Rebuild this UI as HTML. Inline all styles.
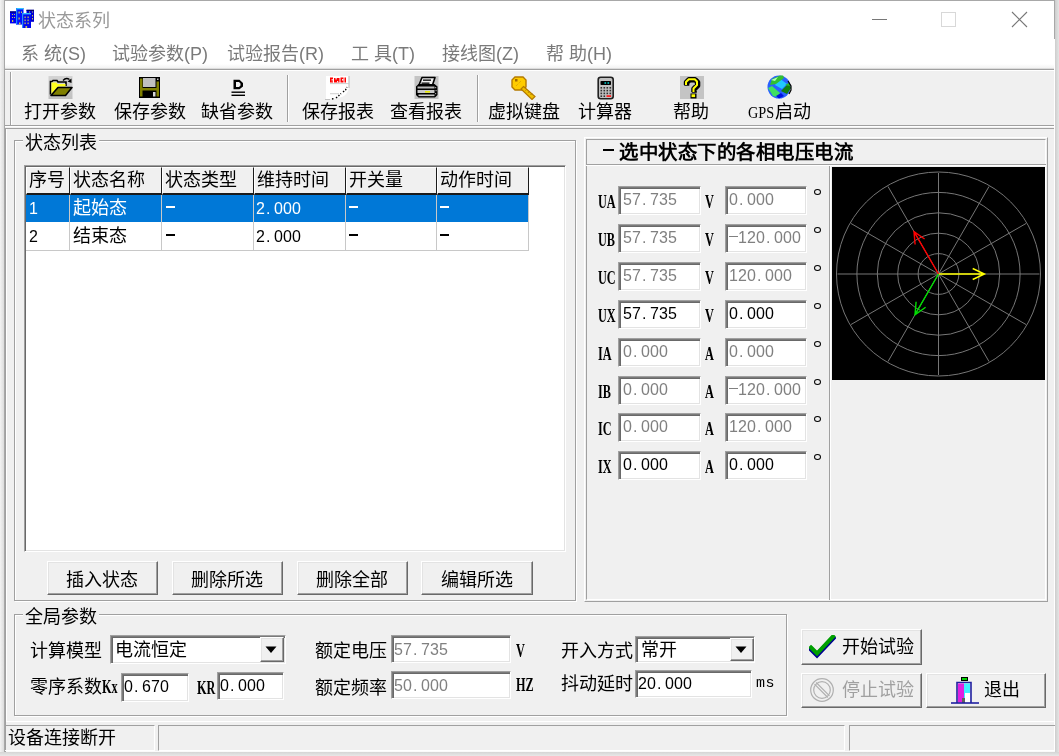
<!DOCTYPE html>
<html lang="zh-CN">
<head>
<meta charset="utf-8">
<style>
*{margin:0;padding:0;box-sizing:border-box}
html,body{width:1059px;height:756px;overflow:hidden}
body{position:relative;background:#e6e6e6;font-family:"Liberation Sans",sans-serif;color:#000}
.a{position:absolute}
.t{position:absolute;white-space:nowrap;line-height:1}
.hl{position:absolute;height:1px}
.vl{position:absolute;width:1px}
.g{background:#a0a0a0}
.w{background:#fff}
.d{background:#696969}
.cj{font-size:18px;line-height:18px}
.mono{font-family:"Liberation Mono",monospace}
/* sunken edit */
.ed{position:absolute;background:#fff;border-top:1px solid #a0a0a0;border-left:1px solid #a0a0a0;border-right:1px solid #fff;border-bottom:1px solid #fff;box-shadow:inset 1px 1px 0 #7a7a7a, inset 2px 2px 0 #696969, inset -1px -1px 0 #e3e3e3}
.num{position:absolute;font-family:"Liberation Sans",sans-serif;font-size:16px;line-height:16px;white-space:nowrap;letter-spacing:0.1px}
.dt{display:inline-block;width:9px;text-indent:1px}
.mn{display:inline-block;width:9px;height:16px;vertical-align:top;background:linear-gradient(currentColor,currentColor) no-repeat 0 6px/9px 1px}
.dis{color:#808080}
/* raised button */
.btn{position:absolute;background:#f0f0f0;border-top:1px solid #fff;border-left:1px solid #fff;border-right:1px solid #696969;border-bottom:1px solid #696969;box-shadow:inset -1px -1px 0 #a0a0a0, inset 1px 1px 0 #e3e3e3}
.lab{position:absolute;font-family:"Liberation Serif",serif;font-weight:bold;font-size:18px;line-height:18px;white-space:nowrap;transform-origin:0 0;transform:scaleX(0.68)}
</style>
</head>
<body>
<div id="root" style="position:absolute;left:0;top:0;width:1059px;height:756px;overflow:hidden;filter:blur(0.4px)">
<!-- window frame -->
<div class="a" style="left:0;top:0;width:4px;height:756px;background:linear-gradient(90deg,#f3f3f3,#dcdcdc)"></div>
<div class="a" style="left:1055px;top:0;width:4px;height:756px;background:linear-gradient(90deg,#cdcdcd,#e4e4e4)"></div>
<div class="a" style="left:0;top:752px;width:1059px;height:4px;background:linear-gradient(#d5d5d5,#e8e8e8)"></div>
<div class="a" style="left:4px;top:0;width:1051px;height:752px;background:#f0f0f0;border-top:1px solid #a8a8a8;border-left:1px solid #a8a8a8"></div>
<div class="a w" style="left:1054px;top:39px;width:1px;height:713px"></div>
<div class="a" style="left:1054px;top:0;width:1px;height:39px;background:#a8a8a8"></div>
<div class="a" style="left:5px;top:751px;width:1050px;height:1px;background:#fafafa"></div>
<!-- title + menu white area -->
<div class="a w" style="left:5px;top:1px;width:1049px;height:68px"></div>
<div class="a" style="left:5px;top:64px;width:1049px;height:5px;background:linear-gradient(#fff,#f0f0f0)"></div>
<div class="hl" style="left:5px;top:68px;width:1049px;background:#dcdcdc"></div>
<div class="hl g" style="left:5px;top:69px;width:1049px"></div>
<div class="hl w" style="left:5px;top:70px;width:1049px"></div>

<!-- title -->
<div id="appicon" class="a" style="left:10px;top:8px;width:25px;height:21px">
<svg width="25" height="21" viewBox="0 0 25 21">
<rect x="0" y="3.4" width="6.5" height="12" fill="#0000f0"/>
<rect x="0" y="3.4" width="6.5" height="1.3" fill="#000070"/>
<rect x="16.5" y="1.8" width="7.5" height="12" fill="#0000d0"/>
<rect x="16.5" y="1.8" width="7.5" height="1.2" fill="#000060"/>
<rect x="6" y="0" width="7.5" height="16.6" fill="#0010ff"/>
<rect x="6" y="0" width="7.5" height="1.4" fill="#30c8ff"/>
<rect x="6" y="0" width="1.2" height="16.6" fill="#2090ff"/>
<rect x="12" y="5" width="9" height="15" fill="#0008f0"/>
<rect x="12" y="5" width="9" height="1.4" fill="#30c0ff"/>
<rect x="12" y="5" width="1.2" height="15" fill="#2890ff"/>
<g fill="#c8c850">
<rect x="2" y="6" width="1" height="1"/><rect x="4" y="6" width="1" height="1"/><rect x="2" y="9" width="1" height="1"/><rect x="4" y="9" width="1" height="1"/><rect x="2" y="12" width="1.2" height="2"/>
<rect x="8.5" y="3.5" width="1.2" height="2"/><rect x="11" y="3.5" width="1" height="1.5"/><rect x="8.5" y="9.5" width="1.2" height="2"/><rect x="9" y="14.5" width="1.5" height="2"/>
<rect x="14.5" y="8.5" width="1.2" height="1.6"/><rect x="17.5" y="8.5" width="1.2" height="1.6"/><rect x="14.5" y="11.5" width="1.2" height="1.6"/><rect x="17.5" y="11.5" width="1.2" height="1.6"/><rect x="14.5" y="14.5" width="1.2" height="1.6"/><rect x="17.5" y="14.5" width="1.2" height="1.6"/><rect x="15.5" y="18" width="1.6" height="2"/>
<rect x="19" y="3.5" width="1" height="1"/><rect x="22" y="3.5" width="1" height="1"/><rect x="22" y="7" width="1" height="1.5"/><rect x="22" y="10" width="1" height="1.5"/>
</g>
</svg>
</div>
<div class="t" style="left:38px;top:12px;font-size:18px;color:#999">状态系列</div>
<!-- window controls -->
<div class="a" style="left:872px;top:19px;width:15px;height:1px;background:#777"></div>
<div class="a" style="left:941px;top:12px;width:15px;height:15px;border:1px solid #d8d8d8"></div>
<svg class="a" style="left:1011px;top:11px" width="17" height="17" viewBox="0 0 17 17"><path d="M1 1L16 16M16 1L1 16" stroke="#777" stroke-width="1.1"/></svg>

<!-- menu -->
<div id="menu" style="font-size:18px;color:#7a7a7a">
<div class="t" style="left:21px;top:45px">系 统(S)</div>
<div class="t" style="left:112px;top:45px">试验参数(P)</div>
<div class="t" style="left:227px;top:45px">试验报告(R)</div>
<div class="t" style="left:351px;top:45px">工 具(T)</div>
<div class="t" style="left:442px;top:45px">接线图(Z)</div>
<div class="t" style="left:546px;top:45px">帮 助(H)</div>
</div>

<!-- toolbar -->
<div class="vl g" style="left:10px;top:72px;height:53px"></div>
<div class="vl w" style="left:11px;top:72px;height:53px"></div>
<div class="hl g" style="left:5px;top:125px;width:1049px"></div>
<div class="hl w" style="left:5px;top:126px;width:1049px"></div>
<div class="hl g" style="left:5px;top:128px;width:1049px"></div>
<div class="vl g" style="left:5px;top:128px;height:624px"></div>
<div class="vl w" style="left:6px;top:129px;height:592px"></div>

<div id="tb" class="cj">
<div class="t" style="left:24px;top:103px">打开参数</div>
<div class="t" style="left:114px;top:103px">保存参数</div>
<div class="t" style="left:201px;top:103px">缺省参数</div>
<div class="t" style="left:302px;top:103px">保存报表</div>
<div class="t" style="left:390px;top:103px">查看报表</div>
<div class="t" style="left:488px;top:103px">虚拟键盘</div>
<div class="t" style="left:578px;top:103px">计算器</div>
<div class="t" style="left:673px;top:103px">帮助</div>
<div class="t" style="left:748px;top:103px"><span style="font-family:'Liberation Serif',serif;font-size:17px;display:inline-block;transform:scaleX(0.84);transform-origin:0 0;width:27px">GPS</span>启动</div>
</div>
<div class="vl g" style="left:287px;top:75px;height:47px"></div>
<div class="vl w" style="left:288px;top:75px;height:47px"></div>
<div class="vl g" style="left:477px;top:75px;height:47px"></div>
<div class="vl w" style="left:478px;top:75px;height:47px"></div>


<!-- toolbar icons -->
<svg class="a" style="left:48px;top:76px" width="25" height="23" viewBox="0 0 25 23">
<defs><linearGradient id="gbg" x1="0" y1="0" x2="0" y2="1"><stop offset="0" stop-color="#d4d4d4"/><stop offset="1" stop-color="#c0c0c0"/></linearGradient></defs>
<rect x="0.5" y="0" width="24" height="23" fill="url(#gbg)"/>
<path d="M2.5 18.5V5.5h1.5l1-1h4l1 1.5h8v4" fill="none" stroke="#000" stroke-width="1.6"/>
<path d="M3.5 18V6.5h5l1 1.5h8v2.5H10z" fill="#ffff20"/>
<path d="M3 19.5L10 11.5H24L17.5 19.5z" fill="#808000" stroke="#000" stroke-width="1.6" stroke-linejoin="round"/>
<path d="M15 4.5Q18 1 21.5 3.5" fill="none" stroke="#000" stroke-width="1.3"/>
<path d="M19.5 5.5L23.5 2.5L23.5 7z" fill="#000"/>
</svg>
<svg class="a" style="left:138px;top:76px" width="23" height="23" viewBox="0 0 23 23">
<rect x="1" y="1" width="21" height="21" fill="#000"/>
<rect x="2" y="2.5" width="2.5" height="18" fill="#808000"/>
<rect x="18.5" y="5.5" width="2.5" height="15" fill="#808000"/>
<rect x="4" y="12" width="15" height="2.5" fill="#808000"/>
<rect x="5" y="2" width="12.5" height="9" fill="#c0c0c0"/>
<rect x="19" y="2.5" width="1.5" height="1.5" fill="#c0c0c0"/>
<rect x="15" y="16" width="2.5" height="4.5" fill="#d8d8d8"/>
</svg>
<svg class="a" style="left:231px;top:79px" width="15" height="18" viewBox="0 0 15 18">
<path d="M2.5 0.8H8.5L12 4V7.5L8.5 10.2H2.5z M5 3V8H8L9.5 6.5V4.5L8 3z" fill="#000" fill-rule="evenodd"/>
<rect x="0.5" y="12.5" width="13.5" height="1.4" fill="#000"/>
<rect x="0.5" y="15.6" width="13.5" height="1.4" fill="#000"/>
</svg>
<svg class="a" style="left:325px;top:75px" width="26" height="26" viewBox="0 0 26 26">
<path d="M1 1H24V13Q22 20 17 22L8 24H1z" fill="#fff"/>
<rect x="23.5" y="1" width="1" height="12" fill="#b8b8b8"/>
<rect x="5" y="8.2" width="19" height="0.9" fill="#c8c8c8"/>
<rect x="5" y="18.3" width="9" height="0.9" fill="#c8c8c8"/>
<g fill="#ff0000"><rect x="5" y="2.5" width="3" height="5"/><rect x="9" y="3" width="5.5" height="4.5"/><rect x="15.5" y="2.5" width="3" height="5"/><rect x="19.5" y="2.5" width="1.5" height="5"/></g>
<g fill="#f0f0f0"><rect x="6.5" y="4" width="1.5" height="0.8"/><rect x="6.5" y="5.5" width="1.5" height="0.8"/><rect x="10.5" y="3" width="1.2" height="1.5"/><rect x="12" y="6" width="1.2" height="1.5"/><rect x="17" y="4" width="1.5" height="1.6"/></g>
<path d="M7 24L9 23.5M11 23L14 20.5 16 18.5M18 17L20.5 15 22 12" fill="none" stroke="#000" stroke-width="1.4" stroke-dasharray="1.5 1.5"/>
<rect x="0" y="24" width="5" height="1" fill="#c0c0c0"/>
</svg>
<svg class="a" style="left:414px;top:76px" width="25" height="23" viewBox="0 0 25 23">
<rect x="0.5" y="0" width="24" height="23" fill="#c4c4c4"/>
<path d="M8 1.5H21L18.5 9H5z" fill="#f0f0f0" stroke="#000" stroke-width="1.6" stroke-linejoin="round"/>
<rect x="9" y="3.5" width="8" height="1.3" fill="#000"/><rect x="7.5" y="6.5" width="8" height="1.3" fill="#000"/>
<path d="M2 10.5L4.5 8H20.5L23.5 10.5V19L21 21.5H4.5L2 19z" fill="#000"/>
<rect x="3.5" y="10.5" width="17" height="2" fill="#b8b8b8"/>
<rect x="3.5" y="14" width="17" height="3" fill="#c8c8c8"/>
<rect x="11" y="15" width="5" height="1.6" fill="#e8e800"/>
<rect x="4.5" y="18.5" width="16" height="1.6" fill="#c8c8c8"/>
<g fill="#9a9a9a"><rect x="21" y="11" width="1.2" height="1.2"/><rect x="21.5" y="14" width="1.2" height="1.2"/><rect x="21" y="17" width="1.2" height="1.2"/></g>
</svg>
<svg class="a" style="left:511px;top:75px" width="25" height="25" viewBox="0 0 25 25">
<path d="M4 2H12L15 5V12L12 15H4L1 12V5z" fill="#ffcc00" stroke="#b47a00" stroke-width="1.4"/>
<path d="M12.5 11.5L24 21.5L21 24.5L10 14z" fill="#f0c000" stroke="#b47a00" stroke-width="1.2"/>
<path d="M14.5 15.5L16 14M17 17.8L18.5 16.3M19.5 20L21 18.5" stroke="#b47a00" stroke-width="1"/>
<rect x="4" y="4" width="2.5" height="2.5" fill="#a06800"/>
<path d="M5 11L10 6" stroke="#d8a000" stroke-width="1" stroke-dasharray="1 1"/>
</svg>
<svg class="a" style="left:597px;top:76px" width="18" height="25" viewBox="0 0 18 25">
<rect x="1.2" y="1.2" width="15" height="21.5" rx="2.5" fill="#c0c0c0" stroke="#202020" stroke-width="1.6"/>
<rect x="3.5" y="5" width="10.5" height="4" rx="0.8" fill="#000"/>
<rect x="7.5" y="6.2" width="1.6" height="1.6" fill="#00c8c8"/><rect x="10.5" y="6.2" width="1.6" height="1.6" fill="#00c8c8"/>
<g fill="#303030">
<rect x="3.5" y="11" width="1.6" height="1.6"/><rect x="6.5" y="11" width="1.6" height="1.6"/><rect x="9.5" y="11" width="1.6" height="1.6"/><rect x="12.5" y="11" width="1.6" height="1.6"/>
<rect x="3.5" y="13.8" width="1.6" height="1.6"/><rect x="6.5" y="13.8" width="1.6" height="1.6"/><rect x="9.5" y="13.8" width="1.6" height="1.6"/><rect x="12.5" y="13.8" width="1.6" height="1.6"/>
<rect x="3.5" y="16.6" width="1.6" height="1.6"/><rect x="6.5" y="16.6" width="1.6" height="1.6"/><rect x="9.5" y="16.6" width="1.6" height="1.6"/><rect x="12.5" y="16.6" width="1.6" height="1.6"/>
<rect x="3.5" y="19.4" width="1.6" height="1.6"/><rect x="6.5" y="19.4" width="1.6" height="1.6"/></g>
<rect x="9.5" y="19.2" width="4.6" height="1.8" fill="#ff2020"/>
</svg>
<svg class="a" style="left:680px;top:76px" width="24" height="23" viewBox="0 0 24 23">
<rect x="0" y="0" width="24" height="23" fill="#c4c4c4"/>
<path d="M6 9V6L8.8 3.2H14.8L17 5.5V9L13.5 12.5V16" fill="none" stroke="#000" stroke-width="5" stroke-linejoin="round" transform="translate(0.8,0.8)"/>
<path d="M6 9V6L8.8 3.2H14.8L17 5.5V9L13.5 12.5V16" fill="none" stroke="#000" stroke-width="4.4" stroke-linejoin="round"/>
<path d="M6 9V6L8.8 3.2H14.8L17 5.5V9L13.5 12.5V16" fill="none" stroke="#ffff00" stroke-width="2" stroke-linejoin="round"/>
<rect x="10.5" y="17.5" width="6" height="5" fill="#000"/>
<rect x="11.5" y="18.3" width="3.6" height="2.8" fill="#ffff00"/>
</svg>
<svg class="a" style="left:767px;top:75px" width="25" height="24" viewBox="0 0 25 24">
<circle cx="12" cy="12" r="11.5" fill="#2860ff"/>
<path d="M12 3L20 9L15 14L8 10z" fill="#20c8ff"/>
<path d="M5 4L13 0.5H16L17 3L9 9L3 10z" fill="#30c030"/>
<path d="M4 5L11 2L8 6z" fill="#b0ffb0"/>
<path d="M1 13L5 11L13 18L11 22L6 21z" fill="#40e060"/>
<path d="M14 16L22 8L24 13L20 19z" fill="#108010"/>
<path d="M18 10L22 8L23 11z" fill="#30c030"/>
<path d="M9 21L14 18L17 21L12 23.5z" fill="#0010e0"/>
<path d="M21 6L24 11V15L22 19" fill="none" stroke="#000" stroke-width="1.2"/>
</svg>

<!-- ===== left group: 状态列表 ===== -->
<div class="a" style="left:14px;top:140px;width:562px;height:461px;border:1px solid #a0a0a0;box-shadow:1px 1px 0 #fff, inset 1px 1px 0 #fff"></div>
<div class="t cj" style="left:23px;top:134px;padding:0 2px;background:#f0f0f0">状态列表</div>
<!-- listbox -->
<div class="a" style="left:24px;top:165px;width:542px;height:387px;background:#fff;border-top:1px solid #a0a0a0;border-left:1px solid #a0a0a0;border-right:1px solid #fff;border-bottom:1px solid #fff;box-shadow:inset 1px 1px 0 #696969, inset -1px -1px 0 #e3e3e3"></div>
<!-- header -->
<div id="hdr" class="cj">
<div class="a" style="left:26px;top:167px;width:44px;height:28px;background:#f0f0f0;border-top:1px solid #fff;border-left:1px solid #fff;border-right:1px solid #1a1a1a;border-bottom:2px solid #1a1a1a"></div>
<div class="a" style="left:70px;top:167px;width:92px;height:28px;background:#f0f0f0;border-top:1px solid #fff;border-left:1px solid #fff;border-right:1px solid #1a1a1a;border-bottom:2px solid #1a1a1a"></div>
<div class="a" style="left:162px;top:167px;width:92px;height:28px;background:#f0f0f0;border-top:1px solid #fff;border-left:1px solid #fff;border-right:1px solid #1a1a1a;border-bottom:2px solid #1a1a1a"></div>
<div class="a" style="left:254px;top:167px;width:92px;height:28px;background:#f0f0f0;border-top:1px solid #fff;border-left:1px solid #fff;border-right:1px solid #1a1a1a;border-bottom:2px solid #1a1a1a"></div>
<div class="a" style="left:346px;top:167px;width:91px;height:28px;background:#f0f0f0;border-top:1px solid #fff;border-left:1px solid #fff;border-right:1px solid #1a1a1a;border-bottom:2px solid #1a1a1a"></div>
<div class="a" style="left:437px;top:167px;width:92px;height:28px;background:#f0f0f0;border-top:1px solid #fff;border-left:1px solid #fff;border-right:1px solid #1a1a1a;border-bottom:2px solid #1a1a1a"></div>
<div class="t" style="left:29px;top:171px">序号</div>
<div class="t" style="left:73px;top:171px">状态名称</div>
<div class="t" style="left:165px;top:171px">状态类型</div>
<div class="t" style="left:257px;top:171px">维持时间</div>
<div class="t" style="left:349px;top:171px">开关量</div>
<div class="t" style="left:440px;top:171px">动作时间</div>
</div>
<!-- rows -->
<div class="a" style="left:26px;top:195px;width:503px;height:27px;background:#0078d7"></div>
<div class="a" style="left:26px;top:250px;width:503px;height:1px;background:#c8c8c8"></div>
<div class="vl" style="left:69px;top:195px;height:56px;background:#c8c8c8"></div>
<div class="vl" style="left:161px;top:195px;height:56px;background:#c8c8c8"></div>
<div class="vl" style="left:253px;top:195px;height:56px;background:#c8c8c8"></div>
<div class="vl" style="left:345px;top:195px;height:56px;background:#c8c8c8"></div>
<div class="vl" style="left:436px;top:195px;height:56px;background:#c8c8c8"></div>
<div class="vl" style="left:528px;top:195px;height:56px;background:#c8c8c8"></div>
<div style="color:#fff">
<div class="num" style="left:29px;top:201px">1</div>
<div class="t cj" style="left:73px;top:199px">起始态</div>
<div class="a" style="left:166px;top:206px;width:9px;height:2px;background:#fff"></div>
<div class="num" style="left:256px;top:201px">2<span class="dt">.</span>000</div>
<div class="a" style="left:349px;top:206px;width:9px;height:2px;background:#fff"></div>
<div class="a" style="left:440px;top:206px;width:9px;height:2px;background:#fff"></div>
</div>
<div style="color:#000">
<div class="num" style="left:29px;top:229px">2</div>
<div class="t cj" style="left:73px;top:227px">结束态</div>
<div class="a" style="left:166px;top:234px;width:9px;height:2px;background:#000"></div>
<div class="num" style="left:256px;top:229px">2<span class="dt">.</span>000</div>
<div class="a" style="left:349px;top:234px;width:9px;height:2px;background:#000"></div>
<div class="a" style="left:440px;top:234px;width:9px;height:2px;background:#000"></div>
</div>
<!-- buttons -->
<div class="btn" style="left:47px;top:561px;width:111px;height:34px"></div>
<div class="btn" style="left:172px;top:561px;width:111px;height:34px"></div>
<div class="btn" style="left:297px;top:561px;width:111px;height:34px"></div>
<div class="btn" style="left:421px;top:561px;width:112px;height:34px"></div>
<div class="cj">
<div class="t" style="left:66px;top:571px">插入状态</div>
<div class="t" style="left:191px;top:571px">删除所选</div>
<div class="t" style="left:316px;top:571px">删除全部</div>
<div class="t" style="left:441px;top:571px">编辑所选</div>
</div>

<!-- ===== right panel ===== -->
<div class="a" style="left:584px;top:137px;width:464px;height:465px;border-top:1px solid #fff;border-left:1px solid #fff;border-right:1px solid #a0a0a0;border-bottom:1px solid #a0a0a0"></div>
<div class="a" style="left:586px;top:139px;width:460px;height:461px;border-top:1px solid #a0a0a0;border-left:1px solid #a0a0a0;border-right:1px solid #fff;border-bottom:1px solid #fff"></div>
<div class="hl g" style="left:586px;top:164px;width:460px"></div>
<div class="hl w" style="left:586px;top:165px;width:460px"></div>
<div class="vl g" style="left:829px;top:166px;height:434px"></div>
<div class="vl w" style="left:830px;top:166px;height:434px"></div>
<div class="a" style="left:603px;top:149px;width:11px;height:2px;background:#000"></div>
<div class="t" style="left:619px;top:143px;font-size:19.4px;letter-spacing:0.55px;font-weight:bold">选中状态下的各相电压电流</div>
<div class="a" style="left:832px;top:167px;width:213px;height:213px;background:#000"></div>
<svg class="a" style="left:832px;top:167px" width="213" height="213" viewBox="0 0 213 213">
<g fill="none" stroke="#767676" stroke-width="1">
<circle cx="106.5" cy="107" r="20.4"/>
<circle cx="106.5" cy="107" r="40.8"/>
<circle cx="106.5" cy="107" r="61.2"/>
<circle cx="106.5" cy="107" r="81.6"/>
<circle cx="106.5" cy="107" r="102"/>
<line x1="5.5" y1="107.0" x2="207.5" y2="107.0"/>
<line x1="19.0" y1="56.5" x2="194.0" y2="157.5"/>
<line x1="56.0" y1="19.5" x2="157.0" y2="194.5"/>
<line x1="106.5" y1="6.0" x2="106.5" y2="208.0"/>
<line x1="157.0" y1="19.5" x2="56.0" y2="194.5"/>
<line x1="194.0" y1="56.5" x2="19.0" y2="157.5"/>
</g>
<path d="M106.5 107L152.5 107.0M140.7 112.5L152.5 107.0L140.7 101.5" stroke="#ffff00" stroke-width="1.4" fill="none"/>
<path d="M106.5 107L82.0 64.6M92.6 72.0L82.0 64.6L83.1 77.5" stroke="#ff0000" stroke-width="1.4" fill="none"/>
<path d="M106.5 107L83.0 147.7M84.1 134.8L83.0 147.7L93.6 140.2" stroke="#00e000" stroke-width="1.4" fill="none"/>
</svg>
<div class="lab" style="left:598px;top:193px">UA</div>
<div class="ed" style="left:618px;top:186px;width:83px;height:29px"></div>
<div class="num dis" style="left:623px;top:192px">57<span class="dt">.</span>735</div>
<div class="lab" style="left:705px;top:193px">V</div>
<div class="ed" style="left:725px;top:186px;width:82px;height:29px"></div>
<div class="num dis" style="left:729px;top:192px">0<span class="dt">.</span>000</div>
<div class="a" style="left:814px;top:189px;width:7px;height:6px;border:1.5px solid #000;border-radius:50%"></div>
<div class="lab" style="left:598px;top:231px">UB</div>
<div class="ed" style="left:618px;top:224px;width:83px;height:29px"></div>
<div class="num dis" style="left:623px;top:230px">57<span class="dt">.</span>735</div>
<div class="lab" style="left:705px;top:231px">V</div>
<div class="ed" style="left:725px;top:224px;width:82px;height:29px"></div>
<div class="num dis" style="left:729px;top:230px"><span class="mn"></span>120<span class="dt">.</span>000</div>
<div class="a" style="left:814px;top:227px;width:7px;height:6px;border:1.5px solid #000;border-radius:50%"></div>
<div class="lab" style="left:598px;top:269px">UC</div>
<div class="ed" style="left:618px;top:262px;width:83px;height:29px"></div>
<div class="num dis" style="left:623px;top:268px">57<span class="dt">.</span>735</div>
<div class="lab" style="left:705px;top:269px">V</div>
<div class="ed" style="left:725px;top:262px;width:82px;height:29px"></div>
<div class="num dis" style="left:729px;top:268px">120<span class="dt">.</span>000</div>
<div class="a" style="left:814px;top:265px;width:7px;height:6px;border:1.5px solid #000;border-radius:50%"></div>
<div class="lab" style="left:598px;top:307px">UX</div>
<div class="ed" style="left:618px;top:300px;width:83px;height:29px"></div>
<div class="num" style="left:623px;top:306px">57<span class="dt">.</span>735</div>
<div class="lab" style="left:705px;top:307px">V</div>
<div class="ed" style="left:725px;top:300px;width:82px;height:29px"></div>
<div class="num" style="left:729px;top:306px">0<span class="dt">.</span>000</div>
<div class="a" style="left:814px;top:303px;width:7px;height:6px;border:1.5px solid #000;border-radius:50%"></div>
<div class="lab" style="left:598px;top:345px">IA</div>
<div class="ed" style="left:618px;top:338px;width:83px;height:29px"></div>
<div class="num dis" style="left:623px;top:344px">0<span class="dt">.</span>000</div>
<div class="lab" style="left:705px;top:345px">A</div>
<div class="ed" style="left:725px;top:338px;width:82px;height:29px"></div>
<div class="num dis" style="left:729px;top:344px">0<span class="dt">.</span>000</div>
<div class="a" style="left:814px;top:341px;width:7px;height:6px;border:1.5px solid #000;border-radius:50%"></div>
<div class="lab" style="left:598px;top:383px">IB</div>
<div class="ed" style="left:618px;top:376px;width:83px;height:29px"></div>
<div class="num dis" style="left:623px;top:382px">0<span class="dt">.</span>000</div>
<div class="lab" style="left:705px;top:383px">A</div>
<div class="ed" style="left:725px;top:376px;width:82px;height:29px"></div>
<div class="num dis" style="left:729px;top:382px"><span class="mn"></span>120<span class="dt">.</span>000</div>
<div class="a" style="left:814px;top:379px;width:7px;height:6px;border:1.5px solid #000;border-radius:50%"></div>
<div class="lab" style="left:598px;top:420px">IC</div>
<div class="ed" style="left:618px;top:413px;width:83px;height:29px"></div>
<div class="num dis" style="left:623px;top:419px">0<span class="dt">.</span>000</div>
<div class="lab" style="left:705px;top:420px">A</div>
<div class="ed" style="left:725px;top:413px;width:82px;height:29px"></div>
<div class="num dis" style="left:729px;top:419px">120<span class="dt">.</span>000</div>
<div class="a" style="left:814px;top:416px;width:7px;height:6px;border:1.5px solid #000;border-radius:50%"></div>
<div class="lab" style="left:598px;top:458px">IX</div>
<div class="ed" style="left:618px;top:451px;width:83px;height:29px"></div>
<div class="num" style="left:623px;top:457px">0<span class="dt">.</span>000</div>
<div class="lab" style="left:705px;top:458px">A</div>
<div class="ed" style="left:725px;top:451px;width:82px;height:29px"></div>
<div class="num" style="left:729px;top:457px">0<span class="dt">.</span>000</div>
<div class="a" style="left:814px;top:454px;width:7px;height:6px;border:1.5px solid #000;border-radius:50%"></div>

<!-- ===== bottom group: 全局参数 ===== -->
<div class="a" style="left:14px;top:614px;width:773px;height:102px;border:1px solid #a0a0a0;box-shadow:1px 1px 0 #fff, inset 1px 1px 0 #fff"></div>
<div class="t cj" style="left:23px;top:608px;padding:0 2px;background:#f0f0f0">全局参数</div>
<div class="cj">
<div class="t" style="left:30px;top:642px">计算模型</div>
<div class="t" style="left:30px;top:678px">零序系数</div>
<div class="t" style="left:315px;top:642px">额定电压</div>
<div class="t" style="left:315px;top:679px">额定频率</div>
<div class="t" style="left:561px;top:642px">开入方式</div>
<div class="t" style="left:561px;top:675px">抖动延时</div>
</div>
<div class="lab" style="left:102px;top:678px">Kx</div>
<div class="lab" style="left:197px;top:679px">KR</div>
<div class="lab" style="left:516px;top:642px">V</div>
<div class="lab" style="left:516px;top:676px">HZ</div>
<div class="t mono" style="left:756px;top:676px;font-size:15px;letter-spacing:0.5px">ms</div>
<!-- combo 1 -->
<div class="ed" style="left:110px;top:635px;width:176px;height:29px"></div>
<div class="t cj" style="left:115px;top:641px">电流恒定</div>
<div class="btn" style="left:260px;top:637px;width:24px;height:25px"></div>
<svg class="a" style="left:265px;top:646px" width="12" height="8" viewBox="0 0 12 8"><path d="M0.5 0.5H11.5L6 7z" fill="#000"/></svg>
<!-- kx, kr -->
<div class="ed" style="left:121px;top:673px;width:68px;height:29px"></div>
<div class="num" style="left:124px;top:679px">0<span class="dt">.</span>670</div>
<div class="ed" style="left:217px;top:672px;width:67px;height:28px"></div>
<div class="num" style="left:220px;top:678px">0<span class="dt">.</span>000</div>
<!-- rated -->
<div class="ed" style="left:391px;top:635px;width:120px;height:28px"></div>
<div class="num dis" style="left:394px;top:642px">57<span class="dt">.</span>735</div>
<div class="ed" style="left:391px;top:671px;width:120px;height:28px"></div>
<div class="num dis" style="left:394px;top:678px">50<span class="dt">.</span>000</div>
<!-- combo 2 -->
<div class="ed" style="left:635px;top:636px;width:120px;height:27px"></div>
<div class="t cj" style="left:641px;top:641px">常开</div>
<div class="btn" style="left:730px;top:638px;width:24px;height:23px"></div>
<svg class="a" style="left:735px;top:646px" width="12" height="8" viewBox="0 0 12 8"><path d="M0.5 0.5H11.5L6 7z" fill="#000"/></svg>
<div class="ed" style="left:635px;top:670px;width:117px;height:28px"></div>
<div class="num" style="left:638px;top:676px">20<span class="dt">.</span>000</div>

<!-- action buttons -->
<div class="btn" style="left:801px;top:629px;width:121px;height:36px"></div>
<div class="btn" style="left:801px;top:673px;width:121px;height:35px"></div>
<div class="btn" style="left:926px;top:673px;width:120px;height:35px"></div>
<svg class="a" style="left:809px;top:635px" width="27" height="25" viewBox="0 0 27 25">
<path d="M2 14L8 20L24 3" fill="none" stroke="#000090" stroke-width="5" stroke-linecap="square"/>
<path d="M2 12.5L8 18.5L24 1.5" fill="none" stroke="#00a000" stroke-width="4" stroke-linecap="square"/>
</svg>
<div class="t cj" style="left:842px;top:638px">开始试验</div>
<svg class="a" style="left:809px;top:677px" width="27" height="26" viewBox="0 0 27 26">
<circle cx="13" cy="13" r="11.3" fill="none" stroke="#b0b0b0" stroke-width="1.2"/>
<circle cx="13" cy="13" r="8.3" fill="none" stroke="#b0b0b0" stroke-width="1.2"/>
<path d="M7.2 5.5L20.5 18.8M5.5 7.2L18.8 20.5" stroke="#b0b0b0" stroke-width="1.2"/>
</svg>
<div class="t cj" style="left:842px;top:681px;color:#a0a0a0">停止试验</div>
<svg class="a" style="left:950px;top:676px" width="30" height="29" viewBox="0 0 30 29">
<rect x="11" y="1" width="7" height="4" fill="#000"/>
<rect x="12" y="2" width="5" height="2" fill="#00d000"/>
<path d="M7 27V6.5H21V27" fill="none" stroke="#2020a0" stroke-width="1.6"/>
<rect x="8" y="7.5" width="6" height="19" fill="#e020e0"/>
<rect x="14" y="7.5" width="6" height="19" fill="#40f0ff"/>
<rect x="15" y="17" width="5" height="10" fill="#fff"/>
<rect x="12" y="22" width="3" height="5" fill="#606060"/>
<path d="M1 27H29" stroke="#2020a0" stroke-width="1.6"/>
</svg>
<div class="t cj" style="left:984px;top:681px">退出</div>

<!-- ===== status bar ===== -->
<div class="hl w" style="left:6px;top:721px;width:1048px"></div>
<div class="a" style="left:5px;top:725px;width:150px;height:26px;border-top:1px solid #a0a0a0;border-right:1px solid #fff;border-bottom:1px solid #fff"></div>
<div class="a" style="left:158px;top:725px;width:687px;height:26px;border-top:1px solid #a0a0a0;border-left:1px solid #a0a0a0;border-right:1px solid #fff;border-bottom:1px solid #fff"></div>
<div class="a" style="left:849px;top:725px;width:206px;height:26px;border-top:1px solid #a0a0a0;border-left:1px solid #a0a0a0;border-bottom:1px solid #fff"></div>
<div class="t" style="left:8px;top:729px;font-size:18px">设备连接断开</div>
</div>
</body>
</html>
